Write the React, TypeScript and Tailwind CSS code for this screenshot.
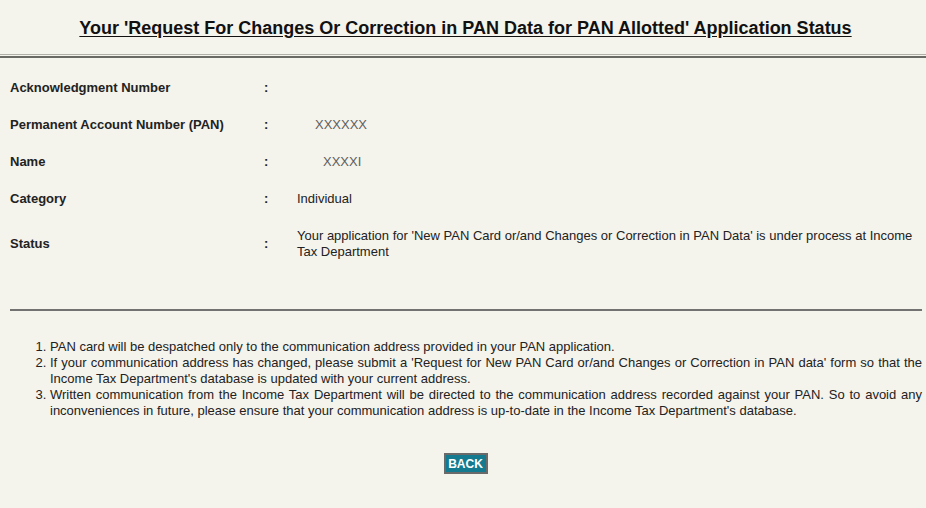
import React from "react";

const rows: { label: string; value: React.ReactNode; tall?: boolean }[] = [
  { label: "Acknowledgment Number", value: "" },
  {
    label: "Permanent Account Number (PAN)",
    value: <span className="pl-[18px] text-[#5e5e5e]">XXXXXX</span>,
  },
  {
    label: "Name",
    value: <span className="pl-[26px] text-[#5e5e5e]">XXXXI</span>,
  },
  { label: "Category", value: "Individual" },
  {
    label: "Status",
    value:
      "Your application for 'New PAN Card or/and Changes or Correction in PAN Data' is under process at Income Tax Department",
    tall: true,
  },
];

export default function App() {
  return (
    <div
      className="min-h-[508px] w-full bg-[#f4f3ec] text-[#222]"
      style={{ fontFamily: '"Liberation Sans", Arial, sans-serif' }}
    >
      <div className="pt-[17px] pl-[5px] text-center">
        <h1 className="text-[18px] font-bold leading-[22px] underline underline-offset-[2px] text-[#111]">
          Your 'Request For Changes Or Correction in PAN Data for PAN Allotted' Application Status
        </h1>
      </div>
      <div className="mt-[15px] h-[4px] border-t border-b-2 border-t-[#b0b0a8] border-b-[#6a6a64]" />

      <div className="px-[10px] pt-[11px]">
        {rows.map((r) => (
          <div
            key={r.label}
            className={`flex items-center text-[13px] ${r.tall ? "h-[53px]" : "h-[37px]"}`}
          >
            <div className="w-[254px] shrink-0 font-bold">{r.label}</div>
            <div className="w-[33px] shrink-0 font-bold">:</div>
            <div className="flex-1 leading-[16px]">{r.value}</div>
          </div>
        ))}
      </div>

      <div className="ml-[10px] mr-[4px] mt-[39px] h-[2px] bg-[#727270]" />

      <ol className="mt-[28px] pl-[50px] pr-[4px] list-decimal text-[13px] leading-[16px] text-justify text-[#222]">
        <li>
          PAN card will be despatched only to the communication address provided in your PAN application.
        </li>
        <li>
          If your communication address has changed, please submit a 'Request for New PAN Card or/and Changes or
          Correction in PAN data' form so that the Income Tax Department's database is updated with your current
          address.
        </li>
        <li>
          Written communication from the Income Tax Department will be directed to the communication address recorded
          against your PAN. So to avoid any inconveniences in future, please ensure that your communication address is
          up-to-date in the Income Tax Department's database.
        </li>
      </ol>

      <div className="mt-[34px] flex justify-center pl-[5px]">
        <button className="h-[21px] w-[44px] border-2 border-[#6a6a6a] bg-[#137a90] text-[12px] font-bold leading-none text-white">
          BACK
        </button>
      </div>
    </div>
  );
}
